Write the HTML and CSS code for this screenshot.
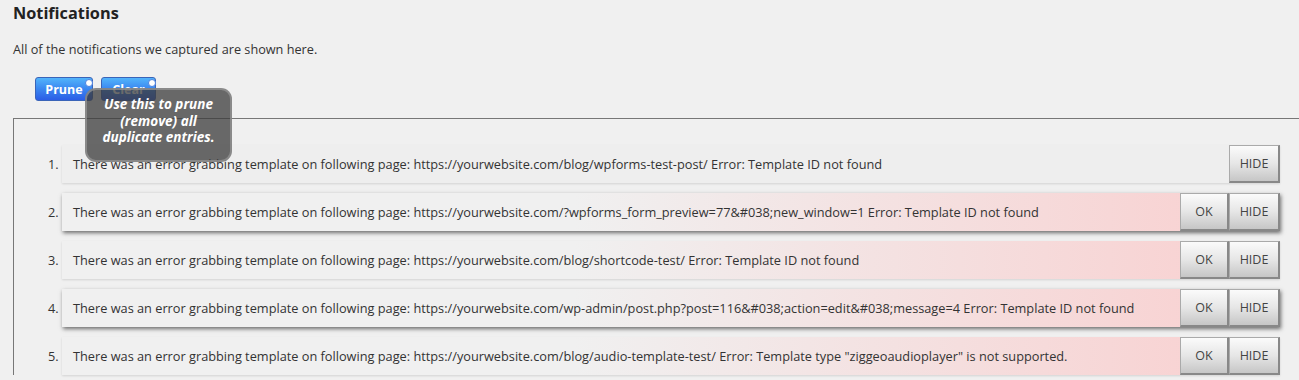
FILE: index.html
```html
<!DOCTYPE html>
<html>
<head>
<meta charset="utf-8">
<link rel="stylesheet" href="styles.css">
</head>
<body>
<div class="page">
  <h1 class="title">Notifications</h1>
  <p class="intro">All of the notifications we captured are shown here.</p>
  <div class="actions">
    <button class="btn-blue">Prune<span class="dot"></span></button>
    <button class="btn-blue">Clear<span class="dot"></span></button>
    <div class="tooltip">Use this to prune (remove) all duplicate entries.</div>
  </div>
  <div class="panel">
    <ol class="list">
      <li><div class="row">
        <span class="msg">There was an error grabbing template on following page: https://yourwebsite.com/blog/wpforms-test-post/ Error: Template ID not found</span>
        <button class="btn-gray btn-hide">HIDE</button>
      </div></li>
      <li><div class="row error raised">
        <span class="msg">There was an error grabbing template on following page: https://yourwebsite.com/?wpforms_form_preview=77&amp;#038;new_window=1 Error: Template ID not found</span>
        <button class="btn-gray btn-ok">OK</button><button class="btn-gray btn-hide">HIDE</button>
      </div></li>
      <li><div class="row error">
        <span class="msg">There was an error grabbing template on following page: https://yourwebsite.com/blog/shortcode-test/ Error: Template ID not found</span>
        <button class="btn-gray btn-ok">OK</button><button class="btn-gray btn-hide">HIDE</button>
      </div></li>
      <li><div class="row error raised">
        <span class="msg">There was an error grabbing template on following page: https://yourwebsite.com/wp-admin/post.php?post=116&amp;#038;action=edit&amp;#038;message=4 Error: Template ID not found</span>
        <button class="btn-gray btn-ok">OK</button><button class="btn-gray btn-hide">HIDE</button>
      </div></li>
      <li><div class="row error">
        <span class="msg">There was an error grabbing template on following page: https://yourwebsite.com/blog/audio-template-test/ Error: Template type "ziggeoaudioplayer" is not supported.</span>
        <button class="btn-gray btn-ok">OK</button><button class="btn-gray btn-hide">HIDE</button>
      </div></li>
    </ol>
  </div>
</div>
</body>
</html>
```
FILE: styles.css
```css
html, body {
  margin: 0;
  padding: 0;
  background: #f0f0f0;
  overflow: hidden;
}
.page {
  font-family: "Open Sans", Lato, sans-serif;
  color: #333;
  padding: 2px 0 0 13px;
}
.title {
  margin: 0;
  font-size: 16.3px;
  font-weight: bold;
  color: #222;
  line-height: 22px;
}
.intro {
  margin: 16px 0 0 0;
  font-size: 12.7px;
  line-height: 18px;
  color: #333;
}
.actions {
  position: relative;
  display: flex;
  gap: 8px;
  margin: 19px 0 0 22px;
  height: 24px;
}
.btn-blue {
  position: relative;
  height: 24px;
  width: 58px;
  padding: 0;
  border: 1px solid #3a64b8;
  border-radius: 3px;
  background: linear-gradient(to bottom, #52b4fb 0%, #3a86f0 50%, #2b5de6 100%);
  color: #fff;
  font-family: "Open Sans", Lato, sans-serif;
  font-weight: bold;
  font-size: 12.5px;
}
.btn-blue + .btn-blue {
  width: 55px;
}
.dot {
  position: absolute;
  top: 1px;
  right: -1px;
  width: 6px;
  height: 6px;
  border-radius: 50%;
  background: #fff;
  border: 1px solid #4a80e0;
}
.tooltip {
  position: absolute;
  left: 50px;
  top: 11px;
  width: 127px;
  height: 58px;
  padding: 6px 8px;
  border: 2px solid rgba(150, 150, 150, 0.75);
  border-radius: 11px;
  background: rgba(60, 60, 60, 0.76);
  color: #fff;
  font-style: italic;
  font-weight: bold;
  font-size: 13.5px;
  line-height: 16.5px;
  text-align: center;
  z-index: 5;
}
.panel {
  margin-top: 17px;
  border-top: 1px solid #777;
  border-left: 1px solid #777;
  padding: 26px 19px 0 0;
}
.list {
  margin: 0;
  padding: 0 0 0 48px;
  font-size: 12.75px;
  color: #333;
}
.list li {
  margin-bottom: 10px;
  padding-left: 0;
}
.list li::marker {
  color: #333;
}
.row {
  display: flex;
  align-items: stretch;
  height: 38px;
  background: #eeeeee;
  box-shadow: 0 1px 2px rgba(0, 0, 0, 0.12);
}
.row.error {
  background: linear-gradient(to right, #f0f0f0 0%, #f0f0f0 42%, #f8d3d3 93%, #f8d3d3 100%);
}
.row.raised {
  box-shadow: 1px 2px 4px rgba(0, 0, 0, 0.55);
}
.msg {
  flex: 1;
  display: flex;
  align-items: center;
  padding-left: 11px;
  white-space: nowrap;
}
.btn-gray {
  border-style: solid;
  border-width: 1px 2px 2px 1px;
  border-color: #aaa #888 #888 #aaa;
  background: linear-gradient(to bottom, #fbfbfb 0%, #e6e6e6 50%, #c6c6c6 100%);
  color: #444;
  font-family: "Open Sans", Lato, sans-serif;
  font-size: 12.5px;
  padding: 0;
  margin: 0;
}
.btn-ok {
  width: 49px;
}
.btn-hide {
  width: 51px;
}
```
